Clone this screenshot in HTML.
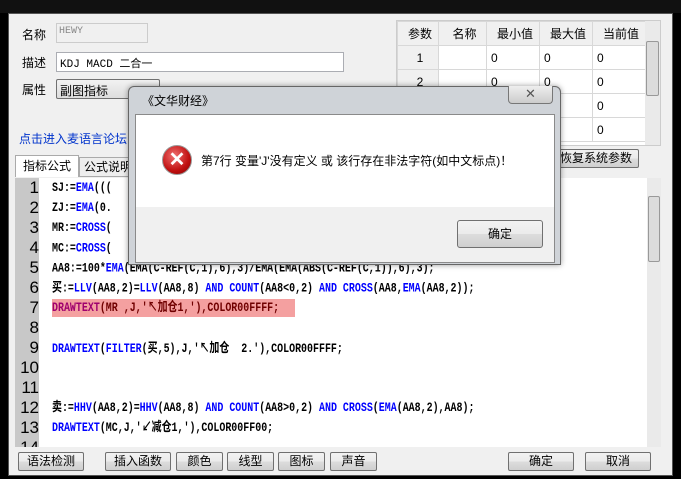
<!DOCTYPE html><html><head><meta charset="utf-8"><style>
*{box-sizing:border-box;margin:0;padding:0}
body{width:681px;height:479px;background:#000;position:relative;overflow:hidden;font-family:"Liberation Sans","Noto Sans CJK SC",sans-serif;font-size:12px;color:#000}
.a{position:absolute}
.win{left:8px;top:13px;width:665px;height:463px;background:#f0f0f0;border:1px solid #555}
.inp{background:#fff;border:1px solid #abadb3}
.btn{position:absolute;height:19px;border:1px solid #707070;border-radius:2px;background:linear-gradient(#f2f2f2,#ebebeb 50%,#dddddd 50%,#cfcfcf);text-align:center;line-height:17px;font-size:12px}
.code{font-family:"Liberation Mono","Noto Sans CJK SC",monospace;font-weight:bold;font-size:12px;white-space:pre;line-height:20px;transform:scale(0.83,1.1);transform-origin:0 0}
.k{color:#0000ff}
.ln{position:absolute;left:15px;width:24px;text-align:right;font-family:"Liberation Sans",sans-serif;font-size:17px;line-height:20px}
table{border-collapse:collapse}
td{border:1px solid #d8d8d8;height:24px;font-size:12px;padding-left:4px}
</style></head><body>
<div class="a" style="left:0;top:0;width:681px;height:13px;background:#111"></div>
<div class="a win"></div>
<div class="a" style="left:22px;top:26px">名称</div>
<div class="a" style="left:56px;top:23px;width:92px;height:20px;border:1px solid #ccc;background:#f0f0f0;font-family:'Liberation Mono';font-size:10px;color:#888;padding:2px">HEWY</div>
<div class="a" style="left:22px;top:54px">描述</div>
<div class="a inp" style="left:56px;top:52px;width:288px;height:20px;padding:2px 3px;font-family:'Liberation Mono','Noto Sans CJK SC';font-size:11px">KDJ MACD  二合一</div>
<div class="a" style="left:22px;top:81px">属性</div>
<div class="a" style="left:56px;top:79px;width:104px;height:20px;border:1px solid #707070;border-radius:2px;background:linear-gradient(#f2f2f2,#ddd);padding:2px 3px">副图指标</div>
<div class="a" style="left:19px;top:130px;color:#0033cc">点击进入麦语言论坛</div>
<div class="a" style="left:15px;top:155px;width:64px;height:22px;background:#fff;border:1px solid #aaa;border-bottom:none;text-align:center;line-height:20px">指标公式</div>
<div class="a" style="left:79px;top:157px;width:60px;height:20px;border:1px solid #aaa;background:#eee;padding-left:4px;line-height:18px">公式说明</div>
<div class="a" style="left:396px;top:20px;width:265px;height:126px;background:#fff;border:1px solid #ccc;overflow:hidden">
<table style="width:249px">
<tr style="background:#f0f0f0"><td style="width:41px;text-align:center">参数</td><td style="width:48px;text-align:center">名称</td><td style="width:53px;text-align:center">最小值</td><td style="width:53px;text-align:center">最大值</td><td style="text-align:center">当前值</td></tr>
<tr><td style="background:#f0f0f0;text-align:center">1</td><td></td><td>0</td><td>0</td><td>0</td></tr>
<tr><td style="background:#f0f0f0;text-align:center">2</td><td></td><td>0</td><td>0</td><td>0</td></tr>
<tr><td style="background:#f0f0f0;text-align:center">3</td><td></td><td>0</td><td>0</td><td>0</td></tr>
<tr><td style="background:#f0f0f0;text-align:center">4</td><td></td><td>0</td><td>0</td><td>0</td></tr>
</table>
<div class="a" style="right:0;top:0;width:15px;height:124px;background:#eaeaea"></div>
<div class="a" style="right:1px;top:20px;width:13px;height:55px;background:#dcdcdc;border:1px solid #999;border-radius:2px"></div>
</div>
<div class="btn" style="left:553px;top:149px;width:86px">恢复系统参数</div>
<div class="a" style="left:15px;top:178px;width:646px;height:269px;background:#fff;overflow:hidden">
<div class="a" style="left:0;top:0;width:24px;height:269px;background:#c8c8c8"></div>
<div class="a" style="left:37px;top:121px;width:243px;height:18px;background:#f4a0a0"></div>
<div class="a" style="right:0;top:0;width:14px;height:269px;background:#eaeaea"></div>
<div class="a" style="right:1px;top:18px;width:12px;height:66px;background:#dcdcdc;border:1px solid #999;border-radius:2px"></div>
</div>
<div class="a" style="left:0;top:180px;width:660px;height:267px;overflow:hidden">
<div class="ln" style="top:-2px">1</div><div class="ln" style="top:18px">2</div><div class="ln" style="top:38px">3</div><div class="ln" style="top:58px">4</div><div class="ln" style="top:78px">5</div><div class="ln" style="top:98px">6</div><div class="ln" style="top:118px">7</div><div class="ln" style="top:138px">8</div><div class="ln" style="top:158px">9</div><div class="ln" style="top:178px">10</div><div class="ln" style="top:198px">11</div><div class="ln" style="top:218px">12</div><div class="ln" style="top:238px">13</div><div class="ln" style="top:258px">14</div>
<div class="a code" style="left:52px;top:-2px;line-height:18.2px">SJ:=<span class="k">EMA</span>(((
ZJ:=<span class="k">EMA</span>(0.
MR:=<span class="k">CROSS</span>(
MC:=<span class="k">CROSS</span>(
AA8:=100*<span class="k">EMA</span>(EMA(C-REF(C,1),6),3)/EMA(EMA(ABS(C-REF(C,1)),6),3);
买:=<span class="k">LLV</span>(AA8,2)=<span class="k">LLV</span>(AA8,8) <span class="k">AND</span> <span class="k">COUNT</span>(AA8&lt;0,2) <span class="k">AND</span> <span class="k">CROSS</span>(AA8,<span class="k">EMA</span>(AA8,2));
<span style="color:#a0006e">DRAWTEXT</span><span style="color:#700000">(MR ,J,'↖加仓1,'),COLOR00FFFF;</span>

<span class="k">DRAWTEXT</span>(<span class="k">FILTER</span>(买,5),J,'↖加仓  2.'),COLOR00FFFF;


卖:=<span class="k">HHV</span>(AA8,2)=<span class="k">HHV</span>(AA8,8) <span class="k">AND</span> <span class="k">COUNT</span>(AA8&gt;0,2) <span class="k">AND</span> <span class="k">CROSS</span>(<span class="k">EMA</span>(AA8,2),AA8);
<span class="k">DRAWTEXT</span>(MC,J,'↙减仓1,'),COLOR00FF00;</div>
</div>
<div class="btn" style="left:18px;top:452px;width:66px">语法检测</div>
<div class="btn" style="left:105px;top:452px;width:66px">插入函数</div>
<div class="btn" style="left:176px;top:452px;width:47px">颜色</div>
<div class="btn" style="left:227px;top:452px;width:47px">线型</div>
<div class="btn" style="left:278px;top:452px;width:47px">图标</div>
<div class="btn" style="left:330px;top:452px;width:47px">声音</div>
<div class="btn" style="left:508px;top:452px;width:66px">确定</div>
<div class="btn" style="left:585px;top:452px;width:66px">取消</div>
<div class="a" style="left:128px;top:86px;width:433px;height:179px;background:#cfd3d8;border:1px solid #666;border-radius:6px 6px 0 0;box-shadow:0 0 6px rgba(0,0,0,.4)"></div>
<div class="a" style="left:142px;top:92px;font-size:12px">《文华财经》</div>
<div class="a" style="left:508px;top:86px;width:45px;height:18px;border:1px solid #777;border-top:none;border-radius:0 0 4px 4px;background:linear-gradient(#eee,#ccc);text-align:center;font-size:13px;line-height:16px;color:#555">✕</div>
<div class="a" style="left:135px;top:114px;width:420px;height:149px;background:#f0f0f0;border:1px solid #8a8a8a"></div>
<div class="a" style="left:136px;top:115px;width:418px;height:92px;background:#fff"></div>
<div class="a" style="left:162px;top:145px;width:30px;height:30px;border-radius:50%;background:radial-gradient(circle at 40% 35%,#f07070,#c01010 60%,#800000);border:1px solid #999;color:#fff;text-align:center;line-height:28px;font-size:20px;font-weight:bold">✕</div>
<div class="a" style="left:201px;top:152px;font-size:12px">第7行 变量'J'没有定义 或 该行存在非法字符(如中文标点)！</div>
<div class="btn" style="left:457px;top:220px;width:86px;height:28px;line-height:26px;border-radius:3px">确定</div>
</body></html>
